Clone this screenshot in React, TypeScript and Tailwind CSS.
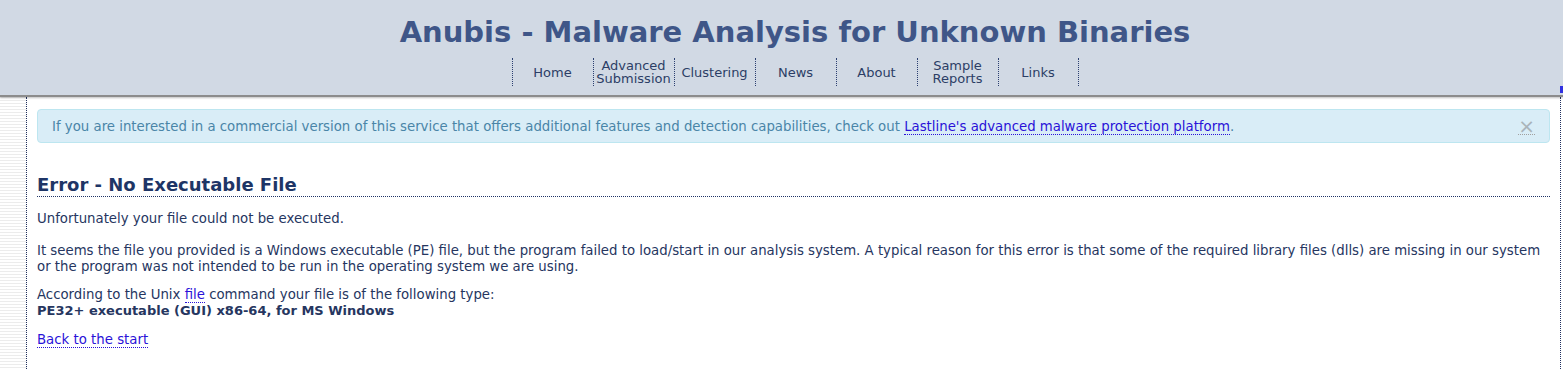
import React from 'react'

const NAV = [
  { label: ['Home'] },
  { label: ['Advanced', 'Submission'] },
  { label: ['Clustering'] },
  { label: ['News'] },
  { label: ['About'] },
  { label: ['Sample', 'Reports'] },
  { label: ['Links'] },
]

const font = 'font-["DejaVu_Sans",Verdana,sans-serif]'

export default function App() {
  return (
    <div className={`${font} min-h-[369px] bg-white text-[13.3px] text-[#26365f]`}>
      {/* Header */}
      <header className="relative h-[97px] bg-[#d1d9e4] border-b-2 border-[#8c8c8c] pl-[27px] shadow-[0_1px_2px_rgba(0,0,0,0.25)]">
        <h1 className="pt-[14px] text-center text-[29px] leading-[36px] font-bold text-[#3f5688]">
          Anubis - Malware Analysis for Unknown Binaries
        </h1>
        <nav className="mt-[8px] flex justify-center">
          {NAV.map((item, i) => (
            <a
              key={i}
              className={`flex h-[28px] w-[81px] flex-col items-center justify-center border-l border-dotted border-[#2b3f70] text-[13px] leading-[13px] text-[#2c3e66] ${
                i === NAV.length - 1 ? 'border-r' : ''
              }`}
            >
              {item.label.map((l) => (
                <span key={l}>{l}</span>
              ))}
            </a>
          ))}
        </nav>
        <span className="absolute right-0 top-[86px] h-[7px] w-[3px] bg-[#3030e0]" />
      </header>

      {/* Body */}
      <div className="flex min-h-[272px]">
        <div className="w-[27px] shrink-0 border-r border-dotted border-[#1f2f5e] bg-[repeating-linear-gradient(to_bottom,#ececec_0px,#ececec_1px,#ffffff_1px,#ffffff_3px)]" />
        <main className="flex-1 px-[10px] pt-[12px]">
          <div className="flex h-[34px] items-center justify-between rounded-[4px] border border-[#bde6f0] bg-[#d9edf7] pl-[14px] pr-[14px] text-[#4a85a8]">
            <p className="pt-[2px]">
              If you are interested in a commercial version of this service that offers additional features and
              detection capabilities, check out{' '}
              <a className="text-[#2a12d8] border-b border-dotted border-[#2a12d8]">
                Lastline's advanced malware protection platform
              </a>
              .
            </p>
            <span className="border-b border-dotted border-[#a0a0a0] text-[20px] leading-[16px] text-[#a9b4ba]">
              ×
            </span>
          </div>

          <h2 className="mt-[32px] border-b border-dotted border-[#1f3366] pb-[1px] text-[18px] leading-[20px] font-bold text-[#1e3566]">
            Error - No Executable File
          </h2>

          <p className="mt-[14px] leading-[16px]">Unfortunately your file could not be executed.</p>

          <p className="mt-[16px] leading-[16px]">
            It seems the file you provided is a Windows executable (PE) file, but the program failed to load/start in
            our analysis system. A typical reason for this error is that some of the required library files (dlls) are
            missing in our system or the program was not intended to be run in the operating system we are using.
          </p>

          <p className="mt-[12px] leading-[16px]">
            According to the Unix{' '}
            <a className="text-[#2a12d8] border-b border-dotted border-[#2a12d8]">file</a> command your file is of the
            following type:
            <br />
            <b className="text-[13px]">PE32+ executable (GUI) x86-64, for MS Windows</b>
          </p>

          <p className="mt-[13px] leading-[16px]">
            <a className="text-[#2a12d8] border-b border-dotted border-[#2a12d8]">Back to the start</a>
          </p>
        </main>
        <div className="w-[3px] shrink-0 border-l border-dotted border-[#1f2f5e]" />
      </div>
    </div>
  )
}
